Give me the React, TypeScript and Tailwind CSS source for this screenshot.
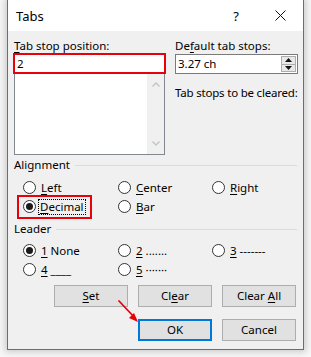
import type { ReactNode } from "react";

function U({ children }: { children: ReactNode }) {
  return <span className="underline decoration-1 underline-offset-[2px]">{children}</span>;
}

function Radio({ checked, children }: { checked?: boolean; children: ReactNode }) {
  return (
    <div className="flex items-center gap-[5px]">
      <span className="flex h-[13px] w-[13px] shrink-0 items-center justify-center rounded-full border border-[#333333] bg-white">
        {checked && <span className="h-[7px] w-[7px] rounded-full bg-[#1a1a1a]" />}
      </span>
      <span className="whitespace-pre">{children}</span>
    </div>
  );
}

function Group({ title }: { title: string }) {
  return (
    <div className="flex h-[16px] items-center gap-[5px] pl-[1px]">
      <span>{title}</span>
      <div className="h-px flex-1 bg-[#dcdcdc]" />
    </div>
  );
}

function Btn({ children, primary }: { children: ReactNode; primary?: boolean }) {
  return (
    <button
      className={`flex h-[22px] w-[74px] items-center justify-center bg-[#e1e1e1] ${
        primary ? "border-2 border-[#0078d7]" : "border border-[#adadad]"
      }`}
    >
      <span className="whitespace-pre">{children}</span>
    </button>
  );
}

const row = "grid h-[19px] grid-cols-[95px_94px_1fr] grid-rows-[19px] items-center";

export default function App() {
  return (
    <div className="relative h-[357px] w-[311px] overflow-hidden bg-[#f7f7f7] font-['Noto_Sans',sans-serif] text-[11.5px] leading-[16px] text-black">
      <div className="ml-[7px] h-[350px] w-[297px] border-x border-b border-[#6d6d6d] bg-[#f0f0f0] shadow-[0_0_7px_2px_rgba(0,0,0,0.18)]">
        {/* title bar */}
        <div className="flex h-[31px] items-center bg-white pl-[8px]">
          <span className="flex-1 text-[13px]">Tabs</span>
          <span className="mr-[36px] text-[13px]">?</span>
          <svg width="11" height="11" viewBox="0 0 11 11" className="mr-[17px]">
            <path d="M0.5 0.5 L10.5 10.5 M10.5 0.5 L0.5 10.5" stroke="#111" strokeWidth="1" />
          </svg>
        </div>

        <div className="pl-[5px] pr-[6px] pt-[7px]">
          <div className="grid grid-cols-[153px_1fr] gap-x-[9px]">
            <div className="flex flex-col">
              <div className="h-[15px] pl-[1px] leading-[15px]">
                <U>T</U>ab stop position:
              </div>
              <div className="flex h-[21px] items-center border-2 border-[#e8000b] bg-white pl-[2px]">2</div>
              <div className="mx-[1px] flex h-[81px] border border-t-0 border-[#828790] bg-white">
                <div className="flex-1" />
                <div className="flex w-[17px] flex-col items-center justify-between bg-[#f0f0f0] py-[8px]">
                  <svg width="8" height="5" viewBox="0 0 8 5">
                    <path d="M0.5 4.5 L4 1 L7.5 4.5" fill="none" stroke="#c4c4c4" strokeWidth="1.4" />
                  </svg>
                  <svg width="8" height="5" viewBox="0 0 8 5">
                    <path d="M0.5 0.5 L4 4 L7.5 0.5" fill="none" stroke="#c4c4c4" strokeWidth="1.4" />
                  </svg>
                </div>
              </div>
            </div>
            <div className="flex flex-col">
              <div className="h-[15px] leading-[15px]">
                De<U>f</U>ault tab stops:
              </div>
              <div className="mt-[1px] flex h-[20px] items-center border border-[#7a7a7a] bg-white pl-[2px]">
                <span className="flex-1">3.27 ch</span>
                <div className="mr-[1px] flex h-[16px] w-[15px] flex-col border border-[#adadad] bg-[#e8e8e8]">
                  <div className="flex flex-1 items-center justify-center border-b border-[#adadad]">
                    <svg width="7" height="4" viewBox="0 0 7 4">
                      <path d="M0 4 L3.5 0 L7 4 Z" fill="#111" />
                    </svg>
                  </div>
                  <div className="flex flex-1 items-center justify-center">
                    <svg width="7" height="4" viewBox="0 0 7 4">
                      <path d="M0 0 L3.5 4 L7 0 Z" fill="#111" />
                    </svg>
                  </div>
                </div>
              </div>
              <div className="mt-[11px] whitespace-nowrap tracking-[-0.2px]">Tab stops to be cleared:</div>
            </div>
          </div>

          <div className="mt-[2px]">
            <Group title="Alignment" />
          </div>
          <div className="mt-[5px] pl-[10px]">
            <div className={row}>
              <Radio>
                <U>L</U>eft
              </Radio>
              <Radio>
                <U>C</U>enter
              </Radio>
              <Radio>
                <U>R</U>ight
              </Radio>
            </div>
            <div className={row}>
              <div className="-ml-[6px] flex h-[24px] w-[75px] items-center border-2 border-[#e8000b] pl-[4px]">
                <div className="flex items-center gap-[2px]">
                  <span className="flex h-[13px] w-[13px] shrink-0 items-center justify-center rounded-full border border-[#333333] bg-white">
                    <span className="h-[7px] w-[7px] rounded-full bg-[#1a1a1a]" />
                  </span>
                  <span className="border border-dotted border-black px-[1px] leading-[14px]">
                    <U>D</U>ecimal
                  </span>
                </div>
              </div>
              <Radio>
                <U>B</U>ar
              </Radio>
              <div />
            </div>
          </div>

          <div className="mt-[5px]">
            <Group title="Leader" />
          </div>
          <div className="mt-[4px] pl-[10px]">
            <div className={row}>
              <Radio checked>
                <U>1</U> None
              </Radio>
              <Radio>
                <U>2</U> .......
              </Radio>
              <Radio>
                <U>3</U> -------
              </Radio>
            </div>
            <div className={row}>
              <Radio>
                <U>4</U> ____
              </Radio>
              <Radio>
                <U>5</U> ·······
              </Radio>
              <div />
            </div>
          </div>

          <div className="mt-[6px] flex justify-end gap-[10px] pr-[1px]">
            <Btn>
              <U>S</U>et
            </Btn>
            <Btn>
              Cl<U>e</U>ar
            </Btn>
            <Btn>
              Clear <U>A</U>ll
            </Btn>
          </div>
          <div className="mt-[12px] flex justify-end gap-[10px] pr-[1px]">
            <Btn primary>OK</Btn>
            <Btn>Cancel</Btn>
          </div>
        </div>
      </div>

      {/* annotation arrow */}
      <svg className="absolute left-0 top-0" width="311" height="357" viewBox="0 0 311 357">
        <path d="M119 301 L135 318" stroke="#e8000b" strokeWidth="1.8" strokeLinecap="round" />
        <path d="M138 322 L129 318 L134 313 Z" fill="#e8000b" />
      </svg>
    </div>
  );
}
